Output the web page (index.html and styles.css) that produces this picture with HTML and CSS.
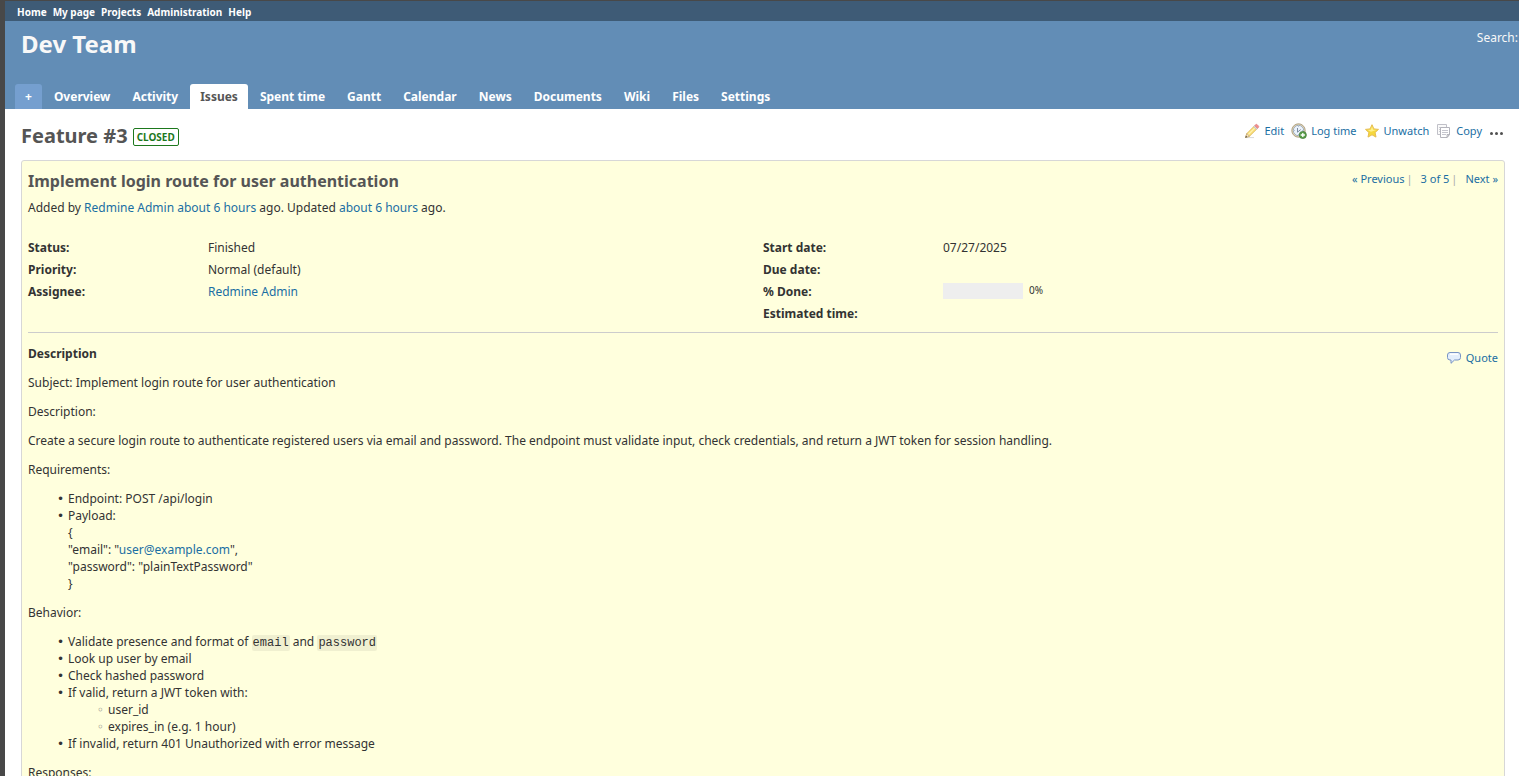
FILE: index.html
```html
<!DOCTYPE html>
<html lang="en">
<head>
<meta charset="utf-8">
<title>Feature #3: Implement login route for user authentication - Dev Team</title>
<link rel="stylesheet" href="styles.css">
</head>
<body>
<div class="wrapper">
  <nav class="top-menu" aria-label="Site">
    <a href="#">Home</a>
    <a href="#">My page</a>
    <a href="#">Projects</a>
    <a href="#">Administration</a>
    <a href="#">Help</a>
  </nav>

  <header class="header">
    <div class="header-row">
      <h1 class="project-name">Dev Team</h1>
      <div class="quick-search"><a href="#">Search</a>:</div>
    </div>
    <nav class="main-menu" aria-label="Project">
      <a class="tab tab-new" href="#">+</a>
      <a class="tab" href="#">Overview</a>
      <a class="tab" href="#">Activity</a>
      <a class="tab tab-selected" href="#">Issues</a>
      <a class="tab" href="#">Spent time</a>
      <a class="tab" href="#">Gantt</a>
      <a class="tab" href="#">Calendar</a>
      <a class="tab" href="#">News</a>
      <a class="tab" href="#">Documents</a>
      <a class="tab" href="#">Wiki</a>
      <a class="tab" href="#">Files</a>
      <a class="tab" href="#">Settings</a>
    </nav>
  </header>

  <main class="content">
    <div class="title-row">
      <h2 class="page-title">Feature #3 <span class="badge">closed</span></h2>
      <div class="contextual">
        <a class="action" href="#">
          <svg class="icon" viewBox="0 0 16 16" aria-hidden="true">
            <path d="M2 14.600h8" stroke="#d9d9d9" stroke-width="1"/>
            <path d="M1.500 14.500l1.300-4L10 3.300l2.800 2.800-7.300 7.200z" fill="#f8dc72" stroke="#d9b45a" stroke-width=".7"/>
            <path d="M4.300 11.500l7-7" stroke="#fff2b0" stroke-width="1.200"/>
            <path d="M1.500 14.500l1.300-4 2.700 2.800z" fill="#f3e3c6" stroke="#b99a68" stroke-width=".6"/>
            <path d="M1.300 14.700l.7-1.900 1.200 1.200z" fill="#444"/>
            <path d="M9.600 3.700l1.100-1.100 2.800 2.800-1.100 1.100z" fill="#d4d8dc" stroke="#b5b5b5" stroke-width=".5"/>
            <path d="M10.700 2.600l1-1q.7-.6 1.400 0l1.400 1.400q.6.700 0 1.400l-1 1z" fill="#f28d8d" stroke="#dc7a7a" stroke-width=".6"/>
          </svg>Edit</a>
        <a class="action" href="#">
          <svg class="icon" viewBox="0 0 16 16" aria-hidden="true">
            <circle cx="7.500" cy="7.500" r="6.700" fill="#e6d8b6" stroke="#a89a7c" stroke-width=".9"/>
            <circle cx="7.500" cy="7.500" r="5.200" fill="#eaf2fc" stroke="#96a6b8" stroke-width=".9"/>
            <path d="M7.500 3v1M7.500 11v1M3 7.500h1M11 7.500h1" stroke="#a4b6c8" stroke-width=".8"/>
            <path d="M6.500 5v4.200l3.200-2.700" fill="none" stroke="#6d8096" stroke-width=".9"/>
            <circle cx="11.800" cy="12" r="3.600" fill="#5b9e4c" stroke="#3f7a35" stroke-width=".7"/>
            <path d="M11.800 9.900v4.200M9.700 12h4.200" stroke="#fff" stroke-width="1.300"/>
          </svg>Log time</a>
        <a class="action" href="#">
          <svg class="icon" viewBox="0 0 16 16" aria-hidden="true">
            <path d="M8 1.700l1.900 4.200 4.600.5-3.400 3.100.9 4.600L8 11.800l-4 2.300.9-4.600L1.500 6.400l4.600-.5z" fill="#f6d83d" stroke="#e6bd50" stroke-width="1" stroke-linejoin="round"/>
            <path d="M8 3.600l1.200 3.100 3.100.4-5.300 1.600-3.400-1.600 3.200-.4z" fill="#fff08a"/>
          </svg>Unwatch</a>
        <a class="action" href="#">
          <svg class="icon" viewBox="0 0 16 16" aria-hidden="true">
            <path d="M1.500 1.500h9v10h-9z" fill="#fafafa" stroke="#c0c0c8"/>
            <path d="M3 4.500h2M3 6.500h2M3 8.500h2" stroke="#cccdd3"/>
            <path d="M4.500 4.500h9v7l-2.500 3H4.500z" fill="#fff" stroke="#b4b4bc"/>
            <path d="M6 7.500h6M6 9.500h6M6 11.500h4" stroke="#c6c6ce"/>
            <path d="M13.500 11.500h-2.500v3z" fill="#e3e3e6" stroke="#a8a8b0" stroke-width=".8"/>
          </svg>Copy</a>
        <button class="more" type="button" aria-label="Actions">
          <svg class="icon" viewBox="0 0 16 16" aria-hidden="true">
            <g fill="#505050"><circle cx="2.500" cy="10.500" r="1.500"/><circle cx="7.500" cy="10.500" r="1.500"/><circle cx="12.500" cy="10.500" r="1.500"/></g>
          </svg>
        </button>
      </div>
    </div>

    <article class="issue">
      <div class="subject-row">
        <h3 class="subject">Implement login route for user authentication</h3>
        <nav class="pager" aria-label="Issues">
          <a href="#">« Previous</a><span class="bar">|</span>
          <a href="#">3 of 5</a><span class="bar">|</span>
          <a href="#">Next »</a>
        </nav>
      </div>
      <p class="author">Added by <a href="#">Redmine Admin</a> <a href="#">about 6 hours</a> ago. Updated <a href="#">about 6 hours</a> ago.</p>

      <div class="attributes">
        <dl class="attribute-list">
          <div class="attribute"><dt>Status:</dt><dd>Finished</dd></div>
          <div class="attribute"><dt>Priority:</dt><dd>Normal (default)</dd></div>
          <div class="attribute"><dt>Assignee:</dt><dd><a href="#">Redmine Admin</a></dd></div>
        </dl>
        <dl class="attribute-list">
          <div class="attribute"><dt>Start date:</dt><dd>07/27/2025</dd></div>
          <div class="attribute"><dt>Due date:</dt><dd></dd></div>
          <div class="attribute"><dt>% Done:</dt><dd class="done"><span class="progress"></span><span class="percent">0%</span></dd></div>
          <div class="attribute"><dt>Estimated time:</dt><dd></dd></div>
        </dl>
      </div>

      <section class="description">
        <div class="description-head">
          <h4 class="description-title">Description</h4>
          <a class="action quote" href="#">
            <svg class="icon" viewBox="0 0 16 16" aria-hidden="true">
              <path d="M4 2.500h8q2.500 0 2.500 2.500v2.500q0 2.500-2.500 2.500H8.500L5 13.300V10H4Q1.500 10 1.500 7.500V5Q1.500 2.500 4 2.500z" fill="#e4effc" stroke="#7894c4"/>
              <path d="M4 4.200h8" stroke="#fff" stroke-width="1.400"/>
            </svg>Quote</a>
        </div>
        <div class="wiki">
          <p>Subject: Implement login route for user authentication</p>
          <p>Description:</p>
          <p>Create a secure login route to authenticate registered users via email and password. The endpoint must validate input, check credentials, and return a JWT token for session handling.</p>
          <p>Requirements:</p>
          <ul>
            <li>Endpoint: POST /api/login</li>
            <li>Payload:<br>{<br>"email": "<a href="mailto:user@example.com">user@example.com</a>",<br>"password": "plainTextPassword"<br>}</li>
          </ul>
          <p>Behavior:</p>
          <ul>
            <li>Validate presence and format of <code>email</code> and <code>password</code></li>
            <li>Look up user by email</li>
            <li>Check hashed password</li>
            <li>If valid, return a JWT token with:
              <ul>
                <li>user_id</li>
                <li>expires_in (e.g. 1 hour)</li>
              </ul>
            </li>
            <li>If invalid, return 401 Unauthorized with error message</li>
          </ul>
          <p>Responses:</p>
        </div>
      </section>
    </article>
  </main>
</div>
</body>
</html>
```
FILE: styles.css
```css
* { box-sizing: border-box; }

body {
  margin: 0;
  height: 100vh;
  overflow: hidden;
  padding: 1px 0 0 5px;
  background: #484848;
  color: #333;
  font: 12px/17px "Noto Sans", sans-serif;
}

h1, h2, h3, h4, p, dl, dd { margin: 0; }

a { color: #1a6ea3; text-decoration: none; }
a:hover { text-decoration: underline; }

.wrapper { min-height: 100%; background: #fff; }

.top-menu {
  display: flex;
  gap: 6px;
  height: 20px;
  padding: 3px 12px 0;
  background: #3e5b76;
  font-size: 10px;
  font-weight: bold;
}
.top-menu a { color: #fff; }

.header {
  background: #628db6;
  color: #f8f8f8;
}
.header-row {
  display: flex;
  justify-content: space-between;
  padding: 8px 1px 0 16px;
  height: 63px;
}
.project-name { font-size: 24px; line-height: 30px; }
.quick-search a { color: #f8f8f8; }

.main-menu { display: flex; gap: 2px; padding-left: 10px; }
.tab {
  padding: 4px 10px;
  border-radius: 3px 3px 0 0;
  color: #fff;
  font-weight: bold;
}
.tab-new { background: #759fcf; }
.tab-selected { background: #fff; color: #555; }

.content { padding: 10px 14px 0 16px; }

.title-row {
  display: flex;
  justify-content: space-between;
  align-items: flex-start;
  height: 41px;
}
.page-title {
  display: flex;
  align-items: center;
  gap: 5px;
  padding-top: 3px;
  color: #555;
  font-size: 20px;
  line-height: 28px;
}
.badge {
  margin-top: 2px;
  padding: 0 3px;
  border: 1px solid #1d781d;
  border-radius: 2px;
  color: #1d781d;
  font-size: 10px;
  line-height: 16px;
  text-transform: uppercase;
}

.contextual {
  display: flex;
  gap: 7px;
  padding-top: 3px;
  font-size: 11px;
}
.action { display: flex; align-items: center; gap: 4px; }
.icon { display: block; width: 16px; height: 16px; }
.more { padding: 0; border: 0; background: none; }

.issue {
  padding: 6px 6px 12px;
  border: 1px solid #d7d7d7;
  border-radius: 3px;
  background: #ffffdd;
}
.subject-row {
  display: flex;
  justify-content: space-between;
}
.subject {
  padding-top: 3px;
  color: #555;
  font-size: 16px;
  line-height: 22px;
}
.pager { display: flex; padding-top: 3px; font-size: 11px; }
.bar { margin: 0 8px 0 2px; color: #aaa; }
.author { padding-top: 7px; }

.attributes {
  display: grid;
  grid-template-columns: 1fr 1fr;
  padding: 20px 0 8px;
  border-bottom: 1px solid #ccc;
}
.attribute { display: flex; height: 22px; align-items: center; }
.attribute dt { width: 180px; font-weight: bold; }
.done { display: flex; gap: 6px; align-items: center; }
.progress { width: 80px; height: 16px; background: #eee; }
.percent { padding-bottom: 2px; font-size: 10px; line-height: 14px; }

.description-head {
  display: flex;
  justify-content: space-between;
  padding-top: 12px;
}
.description-title { font-size: 12px; }
.quote { padding-top: 8px; height: 17px; font-size: 11px; }
.wiki p { margin: 12px 0; }
.wiki ul { margin: 12px 0; padding-left: 40px; list-style-type: "• "; }
.wiki ul ul { margin: 0; list-style-type: "◦ "; }
.wiki li::marker { font-family: "DejaVu Sans", sans-serif; }
.wiki ul ul li::marker { color: #777; }
.wiki code {
  padding: 1px;
  border-radius: 2px;
  background: rgba(0, 0, 0, 0.06);
  font: 12px/12px "Liberation Mono", monospace;
}
```
